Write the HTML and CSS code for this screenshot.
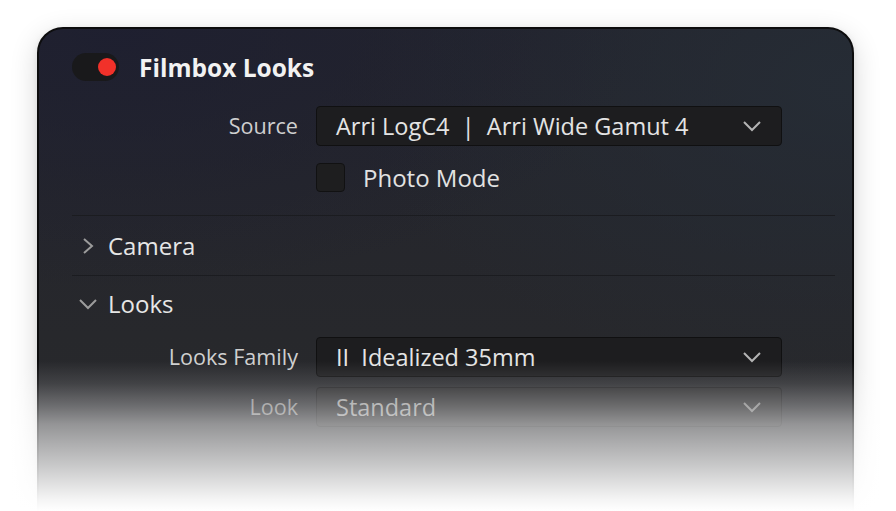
FILE: index.html
```html
<!DOCTYPE html>
<html lang="en">
<head>
<meta charset="utf-8">
<title>Filmbox Looks</title>
<link rel="stylesheet" href="styles.css">
</head>
<body>
<div class="stage">
  <section class="panel">
    <header class="panel-head">
      <span class="toggle"><span class="toggle-dot"></span></span>
      <h1 class="title">Filmbox Looks</h1>
    </header>

    <div class="field">
      <label class="field-label">Source</label>
      <div class="select">
        <span class="select-value">Arri LogC4&nbsp; |&nbsp; Arri Wide Gamut 4</span>
        <svg class="select-chevron" viewBox="0 0 20 12" width="20" height="12"><path d="M2 2 L10 10 L18 2" fill="none" stroke="currentColor" stroke-width="2"/></svg>
      </div>
    </div>

    <div class="field field-check">
      <span class="field-label"></span>
      <span class="checkbox"></span>
      <span class="check-text">Photo Mode</span>
    </div>

    <div class="section">
      <svg class="section-chevron" viewBox="0 0 12 18" width="12" height="18"><path d="M2 2 L10 9 L2 16" fill="none" stroke="currentColor" stroke-width="2"/></svg>
      <span class="section-name">Camera</span>
    </div>

    <div class="section section-open">
      <svg class="section-chevron" viewBox="0 0 20 12" width="20" height="12"><path d="M2 2 L10 10 L18 2" fill="none" stroke="currentColor" stroke-width="2"/></svg>
      <span class="section-name">Looks</span>
    </div>

    <div class="field field-family">
      <label class="field-label">Looks Family</label>
      <div class="select">
        <span class="select-value">II&nbsp; Idealized 35mm</span>
        <svg class="select-chevron" viewBox="0 0 20 12" width="20" height="12"><path d="M2 2 L10 10 L18 2" fill="none" stroke="currentColor" stroke-width="2"/></svg>
      </div>
    </div>

    <div class="field field-look">
      <label class="field-label">Look</label>
      <div class="select">
        <span class="select-value">Standard</span>
        <svg class="select-chevron" viewBox="0 0 20 12" width="20" height="12"><path d="M2 2 L10 10 L18 2" fill="none" stroke="currentColor" stroke-width="2"/></svg>
      </div>
    </div>
  </section>
  <div class="fade"></div>
</div>
</body>
</html>
```

FILE: styles.css
```css
* { box-sizing: border-box; }

html, body {
  margin: 0;
  height: 100%;
  background: #ffffff;
  overflow: hidden;
}

body {
  font-family: "Open Sans", "Noto Sans", "DejaVu Sans", sans-serif;
}

.stage {
  position: relative;
  width: 896px;
  height: 511px;
  overflow: hidden;
  padding: 27px 0 0 37px;
}

.panel {
  width: 817px;
  height: 560px;
  border: 2px solid #0d0d0e;
  border-radius: 26px;
  padding: 24px 17px 0 33px;
  background:
    radial-gradient(ellipse 520px 260px at 10% 0%, rgba(30, 31, 48, 0.9), rgba(30, 31, 48, 0) 100%),
    radial-gradient(ellipse 500px 300px at 100% 10%, rgba(38, 45, 54, 0.9), rgba(38, 45, 54, 0) 100%),
    linear-gradient(180deg, #23242d 0%, #27282c 55%, #2a2a2c 100%);
  box-shadow: 0 8px 28px rgba(0, 0, 0, 0.16), 0 2px 6px rgba(0, 0, 0, 0.08);
}

/* header: power toggle + title */
.panel-head {
  display: flex;
  align-items: center;
  height: 28px;
}

.toggle {
  display: flex;
  align-items: center;
  justify-content: flex-end;
  width: 47px;
  height: 28px;
  padding-right: 3px;
  border-radius: 14px;
  background: #19191b;
}

.toggle-dot {
  width: 18px;
  height: 18px;
  border-radius: 50%;
  background: #f1312a;
}

.title {
  margin: 0 0 0 20px;
  font-size: 24.5px;
  font-weight: 700;
  color: #f2f2f2;
}

/* label + control rows */
.field {
  display: flex;
  align-items: center;
  gap: 18px;
  margin-top: 25px;
}

.field-label {
  flex: 0 0 226px;
  text-align: right;
  font-size: 21.6px;
  line-height: 30px;
  color: #cfcfcf;
}

.select {
  display: flex;
  align-items: center;
  justify-content: space-between;
  width: 466px;
  height: 40px;
  padding: 0 19px 0 19px;
  border: 1px solid #101011;
  border-radius: 4px;
  background: #1d1d1f;
}

.select-value {
  font-size: 23.5px;
  line-height: 32px;
  color: #e4e4e4;
  white-space: pre;
}

.select-chevron {
  color: #b4b4b4;
}

.field-check {
  margin-top: 17px;
  height: 29px;
}

.field-check .field-label {
  line-height: 29px;
}

.checkbox {
  width: 29px;
  height: 29px;
  border: 1px solid #111112;
  border-radius: 4px;
  background: #1e1e1f;
}

.check-text {
  font-size: 24px;
  line-height: 29px;
  color: #e2e2e2;
}

/* collapsible sections */
.section {
  display: flex;
  align-items: center;
  height: 61px;
  margin-top: 23px;
  border-top: 1px solid #1b1c20;
  border-bottom: 1px solid #1b1c20;
}

.section + .section {
  margin-top: 0;
  border-top: none;
}

.section-chevron {
  color: #9c9c9c;
  margin-left: 10px;
  margin-right: 14px;
}

.section-open {
  border-bottom: none;
  height: 56px;
}

.section-open .section-chevron {
  margin-left: 6px;
  margin-right: 10px;
}

.section-name {
  font-size: 24px;
  line-height: 32px;
  color: #e6e6e6;
}

.field-family {
  margin-top: 5px;
}

.field-look {
  margin-top: 10px;
}

.field-look .field-label { color: #8a8a8a; }
.field-look .select-value { color: #9a9a9a; }
.field-look .select-chevron { color: #7e7e7e; }
.field-look .select { background: #262628; border-color: #1a1a1c; }

/* bottom dissolve into the page */
.fade {
  position: absolute;
  left: 0;
  right: 0;
  bottom: 0;
  height: 150px;
  background: linear-gradient(180deg,
    rgba(255, 255, 255, 0) 0%,
    rgba(255, 255, 255, 0.12) 15%,
    rgba(255, 255, 255, 0.32) 30%,
    rgba(255, 255, 255, 0.5) 42%,
    rgba(255, 255, 255, 0.62) 55%,
    rgba(255, 255, 255, 0.75) 70%,
    rgba(255, 255, 255, 0.95) 92%,
    #ffffff 100%);
}
```
